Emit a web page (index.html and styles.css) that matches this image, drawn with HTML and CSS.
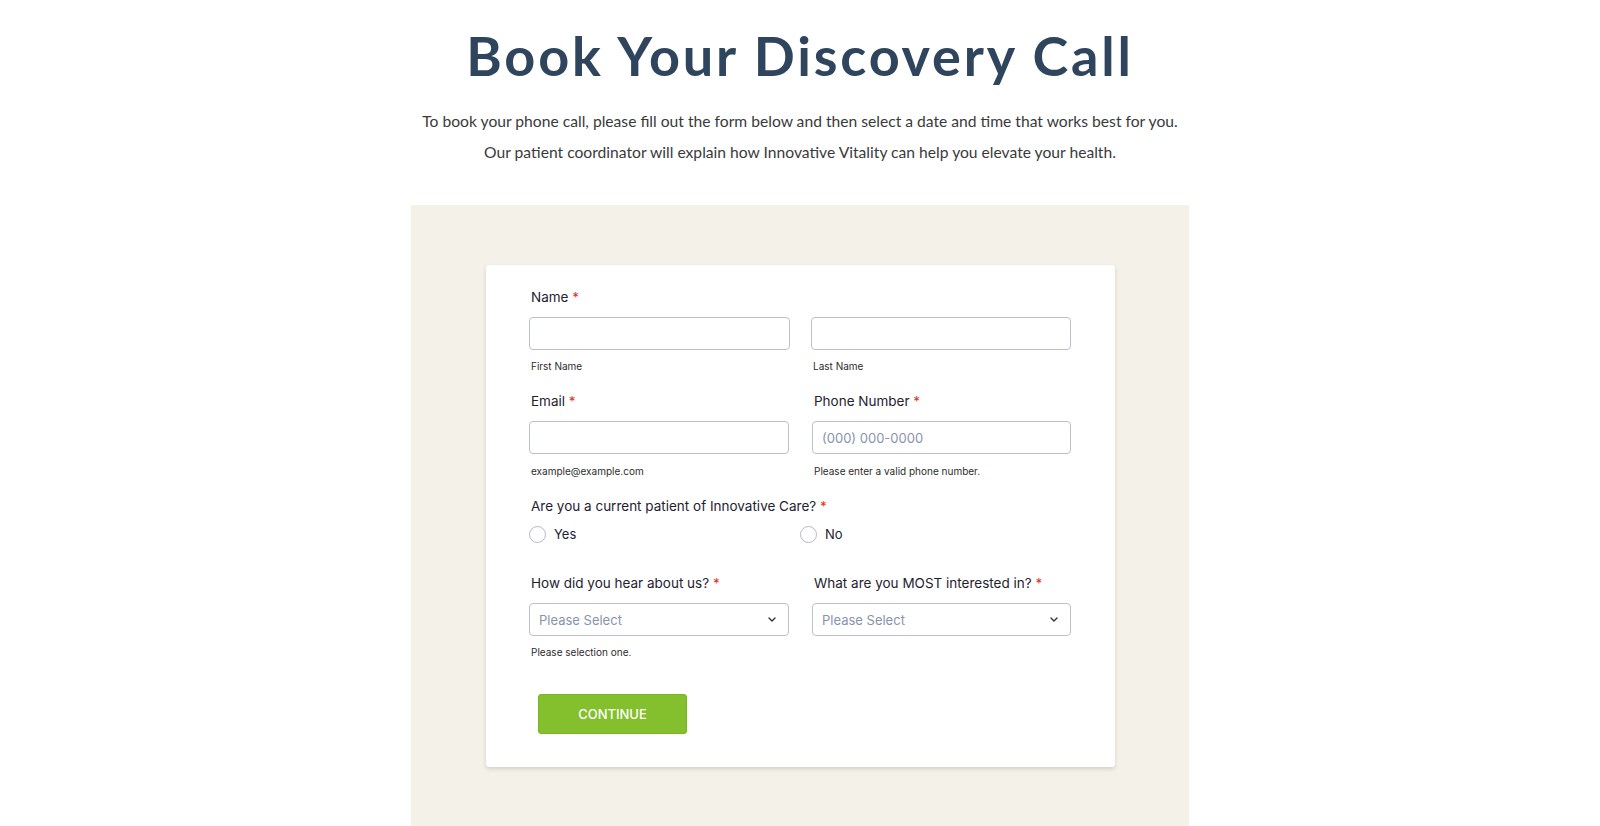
FILE: index.html
```html
<!DOCTYPE html>
<html lang="en">
<head>
<meta charset="utf-8">
<title>Book Your Discovery Call</title>
<link rel="stylesheet" href="styles.css">
</head>
<body>
<header class="intro">
  <h1 class="title">Book Your Discovery Call</h1>
  <p class="lead">To book your phone call, please fill out the form below and then select a date and time that works best for you.<br>Our patient coordinator will explain how Innovative Vitality can help you elevate your health.</p>
</header>
<section class="panel">
  <form class="card">
    <div class="field">
      <div class="label">Name <span class="req">*</span></div>
      <div class="two two-name">
        <div class="sub-field">
          <input class="input" type="text">
          <div class="hint">First Name</div>
        </div>
        <div class="sub-field">
          <input class="input" type="text">
          <div class="hint">Last Name</div>
        </div>
      </div>
    </div>
    <div class="two row">
      <div class="field">
        <div class="label">Email <span class="req">*</span></div>
        <input class="input" type="text">
        <div class="hint">example@example.com</div>
      </div>
      <div class="field">
        <div class="label">Phone Number <span class="req">*</span></div>
        <input class="input" type="text" placeholder="(000) 000-0000">
        <div class="hint">Please enter a valid phone number.</div>
      </div>
    </div>
    <div class="field row field-radio">
      <div class="label">Are you a current patient of Innovative Care? <span class="req">*</span></div>
      <div class="radios">
        <label class="radio"><span class="circle"></span>Yes</label>
        <label class="radio"><span class="circle"></span>No</label>
      </div>
    </div>
    <div class="two row row-select">
      <div class="field">
        <div class="label">How did you hear about us? <span class="req">*</span></div>
        <div class="select">
          <span class="ph">Please Select</span>
          <svg class="chev" width="8" height="5" viewBox="0 0 8 5"><path d="M1 1l3 3 3-3" fill="none" stroke="#2c3345" stroke-width="1.4" stroke-linecap="round" stroke-linejoin="round"/></svg>
        </div>
        <div class="hint">Please selection one.</div>
      </div>
      <div class="field">
        <div class="label">What are you MOST interested in? <span class="req">*</span></div>
        <div class="select">
          <span class="ph">Please Select</span>
          <svg class="chev" width="8" height="5" viewBox="0 0 8 5"><path d="M1 1l3 3 3-3" fill="none" stroke="#2c3345" stroke-width="1.4" stroke-linecap="round" stroke-linejoin="round"/></svg>
        </div>
      </div>
    </div>
    <div class="actions">
      <button class="btn" type="button">CONTINUE</button>
    </div>
  </form>
</section>
</body>
</html>
```
FILE: styles.css
```css
* { box-sizing: border-box; }
html, body { margin: 0; padding: 0; background: #fff; }
body { font-family: Inter, "Noto Sans", sans-serif; color: #2c3345; overflow: hidden; height: 826px; }

.intro { text-align: center; padding-top: 23px; }
.title {
  margin: 0;
  font-family: Lato, "Noto Sans", sans-serif;
  font-weight: 700;
  font-size: 54px;
  line-height: 65px;
  color: #2f455e;
  letter-spacing: 2.8px;
}
.lead {
  margin: 18px 0 0;
  font-family: Lato, "Noto Sans", sans-serif;
  font-weight: 400;
  font-size: 15.65px;
  line-height: 31px;
  color: #3a3a3a;
}

.panel {
  width: 778px;
  margin: 37px auto 0;
  background: #f4f2e8;
  padding: 60px 74px 60px 75px;
}
.card {
  background: #fff;
  border-radius: 3px;
  box-shadow: 0 2px 4px rgba(0,0,0,0.14);
  padding: 22px 44px 33px 43px;
  display: flex;
  flex-direction: column;
}
.field { display: flex; flex-direction: column; }
.label {
  font-size: 13.5px;
  line-height: 20px;
  color: #1f2230;
  padding-left: 2px;
  margin-bottom: 10px;
}
.req { color: #e0341f; }
.two { display: grid; grid-template-columns: 261px 260px; column-gap: 21px; }
.two.row { grid-template-columns: 260px 259px; column-gap: 23px; }
.row { margin-top: 18px; }
.row-select { margin-top: 29px; }
.input {
  display: block;
  width: 100%;
  height: 33px;
  border: 1px solid #bcc0cc;
  border-radius: 4px;
  padding: 0 9px;
  font-family: Inter, sans-serif;
  font-size: 13px;
  color: #2c3345;
  outline: none;
  background: #fff;
}
.input::placeholder { color: #8894ab; }
.hint {
  font-size: 10px;
  line-height: 14px;
  color: #2c2c2c;
  padding-left: 2px;
  margin-top: 9px;
}
.row .hint { margin-top: 10px; }
.field-radio .label { margin-bottom: 8px; }
.radios { display: grid; grid-template-columns: 271px 271px; }
.radio {
  display: flex;
  align-items: center;
  gap: 8px;
  height: 20px;
  font-size: 13px;
  color: #1f2230;
}
.circle {
  width: 17px;
  height: 17px;
  border: 1px solid #b5b9c6;
  border-radius: 50%;
  background: #fff;
  flex: none;
}
.select {
  height: 33px;
  border: 1px solid #bcc0cc;
  border-radius: 4px;
  padding: 0 12px 0 9px;
  display: flex;
  align-items: center;
  justify-content: space-between;
}
.ph { font-size: 13px; color: #8894ab; }
.chev { display: block; }
.row-select .hint { margin-top: 9px; }
.actions { margin-top: 35px; padding-left: 9px; }
.btn {
  width: 149px;
  height: 40px;
  background: #84bf2e;
  border: 1px solid #79b51f;
  border-radius: 3px;
  color: #fff;
  font-family: Inter, sans-serif;
  font-weight: 500;
  font-size: 13px;
}
```
